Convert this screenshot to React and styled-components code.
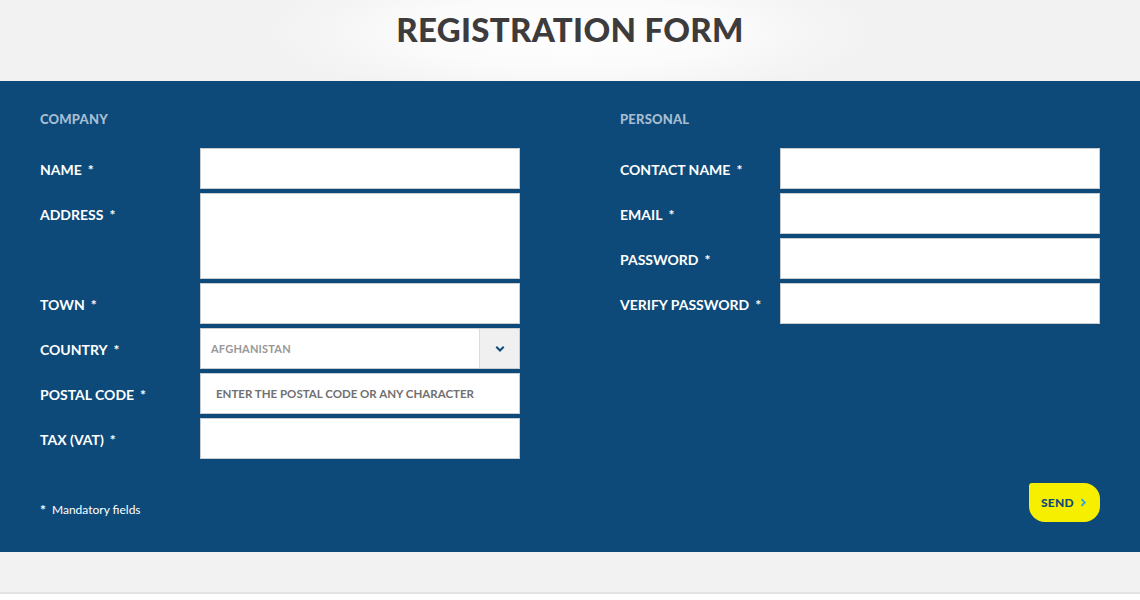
import React from 'react';
import styled, { createGlobalStyle } from 'styled-components';

const GlobalStyle = createGlobalStyle`
  html, body { margin: 0; padding: 0; background: #ffffff; }
  body { font-family: Lato, "Open Sans", sans-serif; }
  * { box-sizing: border-box; }
`;

const Page = styled.div`
  width: 1140px;
  height: 600px;
  display: flex;
  flex-direction: column;
  background: #ffffff;
`;

const Header = styled.header`
  height: 81px;
  display: flex;
  justify-content: center;
  padding-top: 9px;
  background: radial-gradient(ellipse 300px 70px at 50% 40%, #ffffff 0%, #fbfbfb 50%, #f2f2f2 100%);
`;

const Title = styled.h1`
  margin: 0;
  font-family: Lato, sans-serif;
  font-weight: 900;
  font-size: 33px;
  letter-spacing: 0.3px;
  color: #3d3b3b;
`;

const Panel = styled.form`
  height: 471px;
  background: #0d4a79;
  padding: 28px 40px 0 40px;
  display: flex;
  flex-direction: column;
`;

const Columns = styled.div`
  display: grid;
  grid-template-columns: 480px 480px;
  column-gap: 100px;
`;

const Section = styled.div`
  display: flex;
  flex-direction: column;
`;

const SectionTitle = styled.h2`
  margin: 0 0 19px 0;
  font-size: 13px;
  font-weight: 900;
  color: #a7bdd1;
  letter-spacing: 0.2px;
  line-height: 20px;
`;

const Rows = styled.div`
  display: flex;
  flex-direction: column;
  gap: 4px;
`;

const Row = styled.div`
  display: grid;
  grid-template-columns: 160px 320px;
  align-items: start;
`;

const Label = styled.label`
  display: block;
  height: 41px;
  padding-top: 3px;
  color: #ffffff;
  font-size: 14px;
  font-weight: 700;
  line-height: 38px;
  white-space: nowrap;
`;

const Star = styled.span`
  margin-left: 6px;
`;

const Input = styled.input`
  width: 320px;
  height: 41px;
  border: 1px solid #c9ccce;
  background: #fff;
  padding: 0 15px;
  font-family: Lato, sans-serif;
  font-size: 11.5px;
  font-weight: 700;
  color: #444;
  outline: none;
  &::placeholder { color: #707070; opacity: 1; }
`;

const TextArea = styled.textarea`
  width: 320px;
  height: 86px;
  border: 1px solid #c9ccce;
  background: #fff;
  resize: none;
  outline: none;
  display: block;
`;

const SelectBox = styled.div`
  width: 320px;
  height: 41px;
  border: 1px solid #c9ccce;
  background: #fff;
  display: flex;
  align-items: stretch;
`;

const SelectValue = styled.div`
  flex: 1;
  display: flex;
  align-items: center;
  padding-left: 10px;
  font-size: 11px;
  font-weight: 700;
  color: #979797;
  letter-spacing: 0.2px;
`;

const SelectButton = styled.div`
  width: 40px;
  background: #f0f0f0;
  border-left: 1px solid #dcdcdc;
  display: flex;
  align-items: center;
  justify-content: center;
`;

const Footer = styled.div`
  margin-top: 24px;
  display: flex;
  justify-content: space-between;
  align-items: center;
`;

const Note = styled.div`
  color: #fff;
  font-size: 12px;
  display: flex;
  align-items: center;
  gap: 6px;
  margin-top: 14px;
`;

const NoteStar = styled.span`
  font-weight: 700;
  font-size: 14px;
`;

const SendButton = styled.button`
  width: 71px;
  height: 39px;
  border: none;
  border-radius: 3px 16px 16px 16px;
  background: #f6f000;
  color: #0d4a79;
  font-family: Lato, sans-serif;
  font-weight: 900;
  font-size: 12px;
  letter-spacing: 0.3px;
  display: flex;
  align-items: center;
  justify-content: center;
  gap: 5px;
  cursor: pointer;
`;

const BottomBand = styled.div`
  height: 42px;
  background: #f2f2f2;
  border-bottom: 2px solid #e2e2e2;
`;

const Chevron = ({ color, size = 10, dir = 'down' }) => (
  <svg width={size} height={size} viewBox="0 0 10 10">
    <path
      d={dir === 'down' ? 'M2 3.5 L5 6.5 L8 3.5' : 'M3.5 2 L6.5 5 L3.5 8'}
      fill="none"
      stroke={color}
      strokeWidth="2"
      strokeLinecap="square"
    />
  </svg>
);

const Field = ({ label, children }) => (
  <Row>
    <Label>
      {label}
      <Star>*</Star>
    </Label>
    {children}
  </Row>
);

export default function App() {
  return (
    <Page>
      <GlobalStyle />
      <Header>
        <Title>REGISTRATION FORM</Title>
      </Header>
      <Panel onSubmit={e => e.preventDefault()}>
        <Columns>
          <Section>
            <SectionTitle>COMPANY</SectionTitle>
            <Rows>
              <Field label="NAME"><Input type="text" /></Field>
              <Field label="ADDRESS"><TextArea /></Field>
              <Field label="TOWN"><Input type="text" /></Field>
              <Field label="COUNTRY">
                <SelectBox>
                  <SelectValue>AFGHANISTAN</SelectValue>
                  <SelectButton><Chevron color="#0d4a79" /></SelectButton>
                </SelectBox>
              </Field>
              <Field label="POSTAL CODE">
                <Input type="text" placeholder="ENTER THE POSTAL CODE OR ANY CHARACTER" />
              </Field>
              <Field label="TAX (VAT)"><Input type="text" /></Field>
            </Rows>
          </Section>
          <Section>
            <SectionTitle>PERSONAL</SectionTitle>
            <Rows>
              <Field label="CONTACT NAME"><Input type="text" /></Field>
              <Field label="EMAIL"><Input type="email" /></Field>
              <Field label="PASSWORD"><Input type="password" /></Field>
              <Field label="VERIFY PASSWORD"><Input type="password" /></Field>
            </Rows>
          </Section>
        </Columns>
        <Footer>
          <Note><NoteStar>*</NoteStar> Mandatory fields</Note>
          <SendButton type="submit">
            SEND <Chevron color="#29a8e0" size={9} dir="right" />
          </SendButton>
        </Footer>
      </Panel>
      <BottomBand />
    </Page>
  );
}
